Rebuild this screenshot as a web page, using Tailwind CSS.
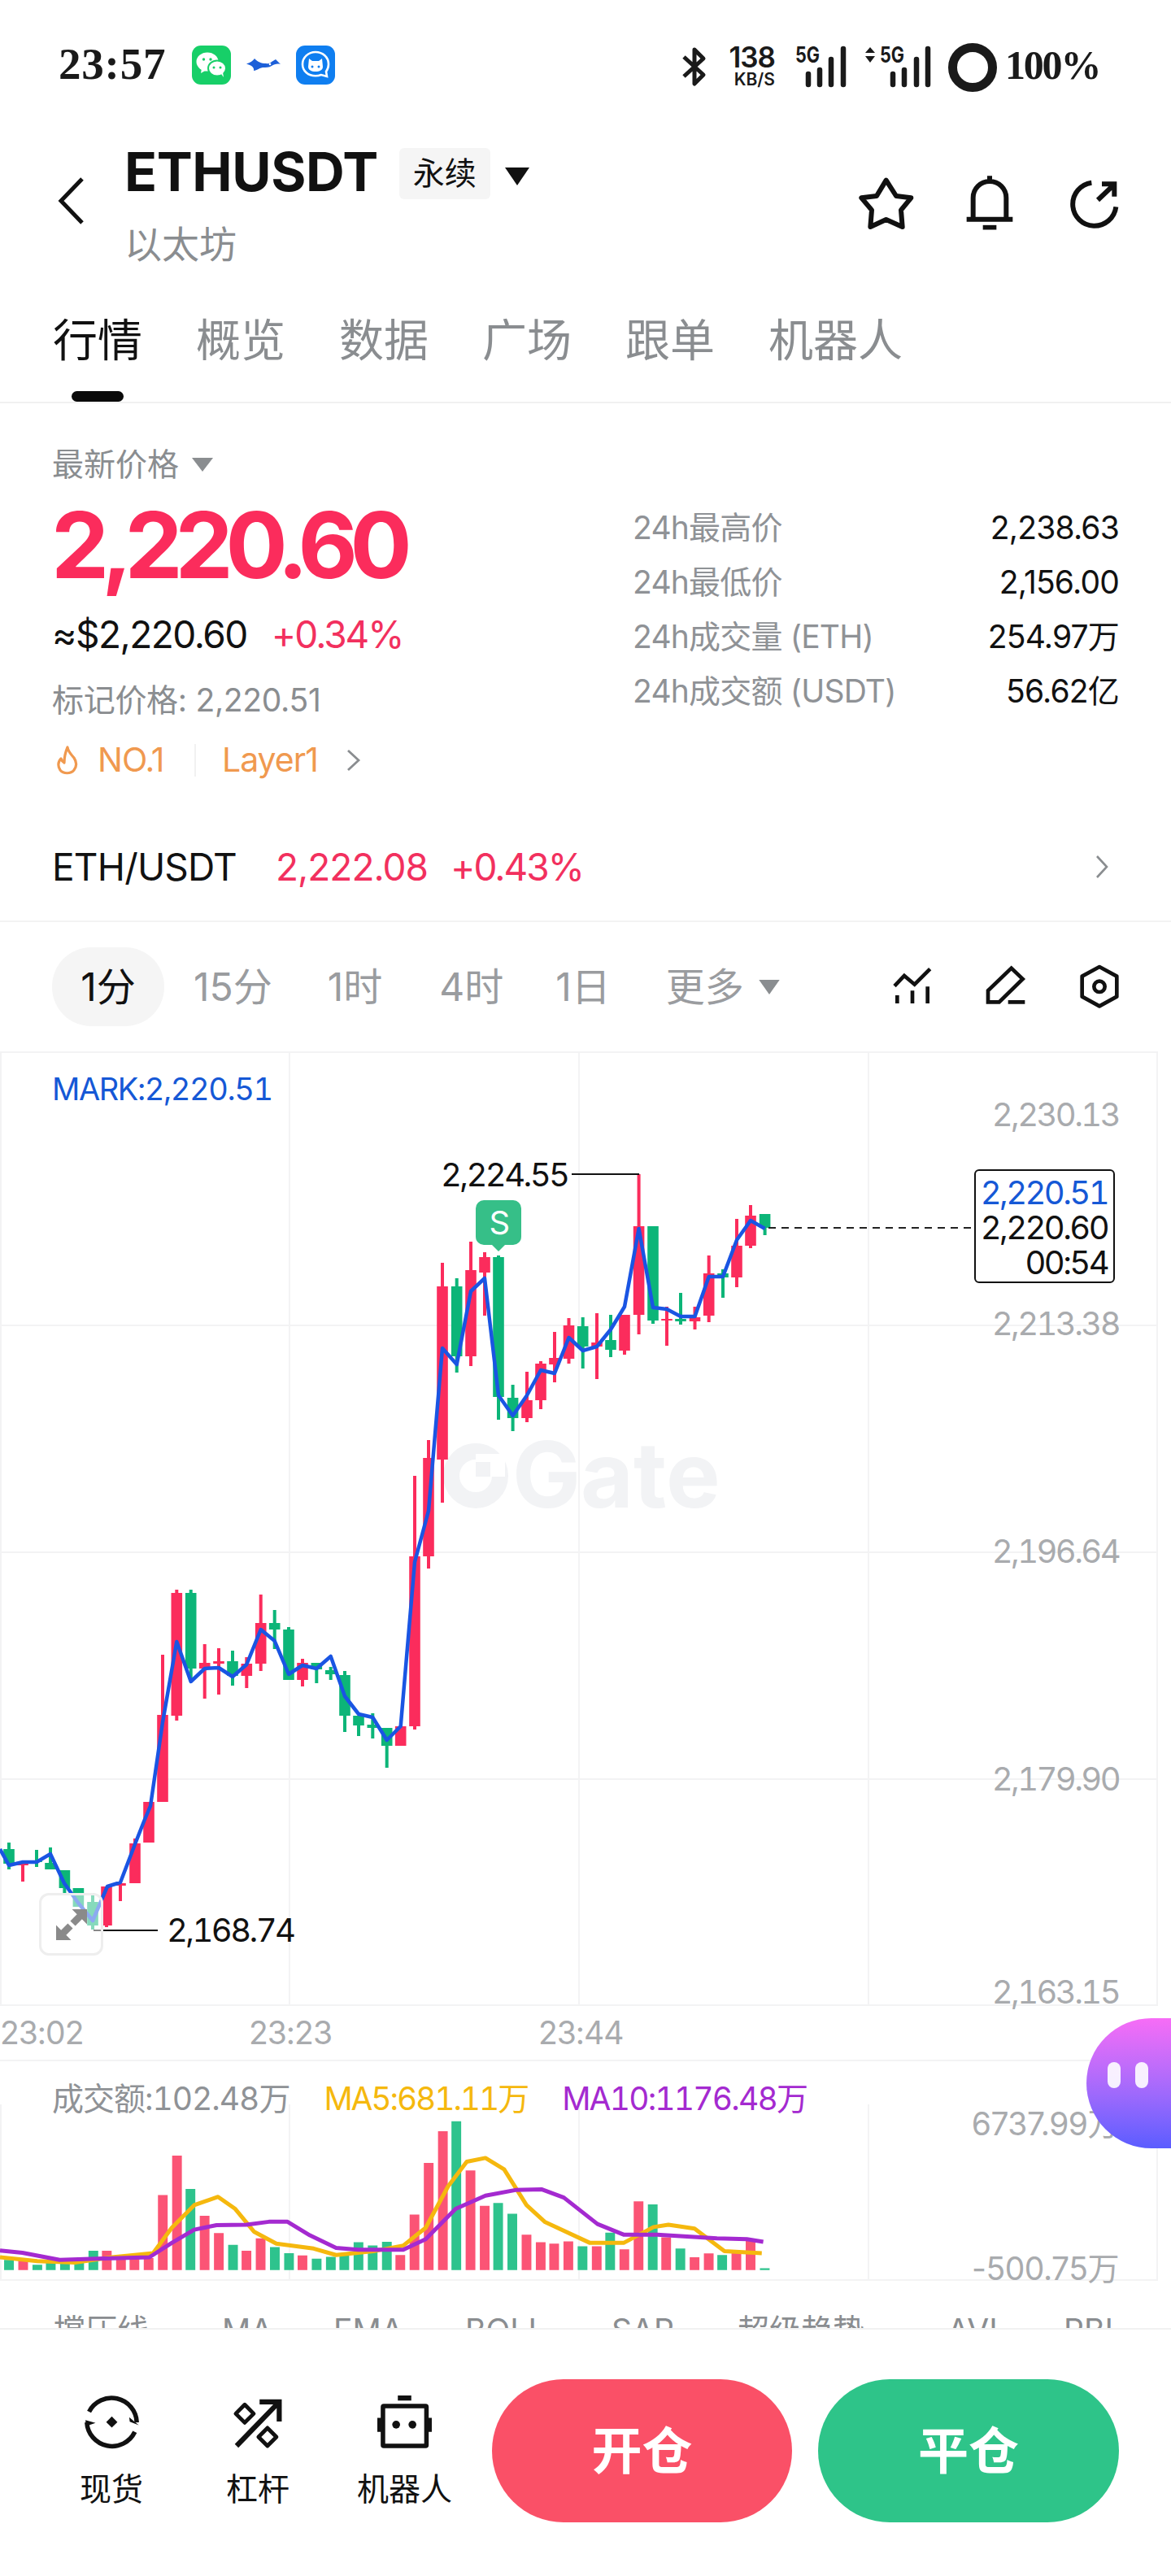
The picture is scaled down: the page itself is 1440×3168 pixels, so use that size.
<!DOCTYPE html>
<html lang="zh">
<head>
<meta charset="utf-8">
<script src="https://cdn.jsdelivr.net/npm/@tailwindcss/browser@4"></script>
<title>ETHUSDT</title>
</head>
<body class="bg-white">
<div class="relative w-[1440px] h-[3168px] overflow-hidden bg-white text-[#111] font-[Inter,'Noto_Sans_CJK_SC',sans-serif]">

  <!-- status bar -->
  <div class="flex items-start h-[160px] pt-[56px]">
    <span class="ml-[72px] w-[164px] h-[48px] leading-[46px] text-[55px] font-bold tracking-[0.8px] text-[#1a1a1a] font-['Liberation_Serif',serif]">23:57</span>
    <svg class="w-[48px] h-[48px]" viewBox="0 0 48 48"><rect width="48" height="48" rx="11" fill="#17cf68"/><ellipse cx="19" cy="20" rx="13.5" ry="11.5" fill="#fff"/><path d="M12 28l-1 6 7-4z" fill="#fff"/><ellipse cx="31" cy="28" rx="11" ry="9.5" fill="#fff" stroke="#17cf68" stroke-width="2"/><path d="M36 35l3 4-1-6z" fill="#fff"/><circle cx="14.500" cy="17" r="1.700" fill="#17cf68"/><circle cx="23" cy="17" r="1.700" fill="#17cf68"/><circle cx="27" cy="27" r="1.500" fill="#17cf68"/><circle cx="35" cy="27" r="1.500" fill="#17cf68"/></svg>
    <svg class="ml-[19px] mt-[15px] w-[42px] h-[18px]" viewBox="0 0 42 16"><path d="M0 6.500C5 5 8 3 10 0c4 4 8 6 14 6 4 1 6-1 7-2l5-3 6 6c-4-1-8 0-11 2-3 2-7 2-11 2-5 1-8 4-11 4 1-4-3-7-9-8.500z" fill="#1c5fd8"/><circle cx="29" cy="7" r="1.300" fill="#fff"/></svg>
    <svg class="ml-[19px] w-[48px] h-[48px]" viewBox="0 0 48 48"><rect width="48" height="48" rx="11" fill="#0f7ef0"/><path d="M24 8c9 0 16 6.500 16 15 0 4-1.500 7-3 9l1 6-7-2c-2 .8-4.500 1.300-7 1.300-9 0-16-6-16-14.300S15 8 24 8z" fill="none" stroke="#fff" stroke-width="2.600"/><path d="M16 16l4 3h8l4-3 1 10c0 4-4 6-9 6s-9-2-9-6z" fill="#fff"/><circle cx="20" cy="26" r="1.500" fill="#0f7ef0"/><circle cx="28" cy="26" r="1.500" fill="#0f7ef0"/></svg>
    <svg class="ml-[427px] w-[30px] h-[52px]" viewBox="0 0 30 50"><path d="M2 13l24 22-11 11V4l11 11L2 37" fill="none" stroke="#1a1a1a" stroke-width="5" stroke-linejoin="round"/></svg>
    <div class="ml-[25px] w-[59px] text-right font-semibold text-[#1a1a1a]">
      <div class="h-[28px] leading-[28px] text-[35px] tracking-[-1px]">138</div>
      <div class="mt-[4px] h-[20px] leading-[20px] text-[21px]">KB/S</div>
    </div>
    <svg class="ml-[25px] w-[66px] h-[52px] overflow-visible" viewBox="0 0 66 52"><text x="0" y="21" font-size="27" font-weight="700" fill="#1a1a1a" textLength="30" lengthAdjust="spacingAndGlyphs">5G</text><path d="M16 48V35M30 48V30M44 48V17M59 48V4" stroke="#1a1a1a" stroke-width="6.500" stroke-linecap="round"/></svg>
    <svg class="ml-[20px] w-[81px] h-[52px] overflow-visible" viewBox="0 0 81 52"><path d="M0 9l6-7 6 7zM0 13l6 8 6-8z" fill="#1a1a1a"/><text x="18" y="21" font-size="27" font-weight="700" fill="#1a1a1a" textLength="30" lengthAdjust="spacingAndGlyphs">5G</text><path d="M34 48V35M48 48V30M63 48V17M77 48V4" stroke="#1a1a1a" stroke-width="6.500" stroke-linecap="round"/></svg>
    <svg class="ml-[21px] -mt-[3px] w-[60px] h-[60px]" viewBox="0 0 60 60"><circle cx="30" cy="30" r="24.500" fill="none" stroke="#1a1a1a" stroke-width="11"/></svg>
    <span class="ml-[10px] -mt-[4px] h-[56px] leading-[56px] text-[50px] font-bold tracking-[-2.200px] text-[#1a1a1a] font-['Liberation_Serif',serif]">100%</span>
  </div>

  <!-- header -->
  <div class="flex items-start h-[200px]">
    <svg class="ml-[68px] mt-[56px] w-[40px] h-[62px]" viewBox="0 0 40 62"><path d="M33 4L7 31l26 27" fill="none" stroke="#111" stroke-width="5"/></svg>
    <div class="ml-[45px] w-[530px]">
      <div class="flex items-start h-[115px]">
        <span class="h-[90px] leading-[90px] mt-[6px] text-[66px] font-bold tracking-[-0.4px]">ETHUSDT</span>
        <span class="ml-[26px] mt-[22px] w-[112px] h-[63px] rounded-[6px] bg-[#f5f5f5] flex items-center justify-center text-[39px]">永续</span>
        <svg class="ml-[18px] mt-[46px] w-[30px] h-[22px]" viewBox="0 0 30 22"><path d="M0 0h30L15 22z" fill="#111"/></svg>
      </div>
      <div class="h-[50px] leading-[50px] text-[46px] text-[#8a8d90]">以太坊</div>
    </div>
    <div class="ml-auto mr-[58px] mt-[55px] flex gap-[57px]">
      <svg class="w-[72px] h-[72px]" viewBox="150 40 216 216"><path d="M263 60L300 118 355 125 318 170 323 232 263 205 205 232 210 170 172 125 228 118Z" fill="none" stroke="#111" stroke-width="18" stroke-linejoin="round"/></svg>
      <svg class="w-[72px] h-[72px]" viewBox="540 40 216 216"><path d="M648 44V66M587 205V125A61 61 0 0 1 709 125V205M563 204H733" fill="none" stroke="#111" stroke-width="18"/><path d="M623 234H673" stroke="#111" stroke-width="17"/></svg>
      <svg class="w-[72px] h-[72px]" viewBox="925 42 216 216"><path d="M1022 71A80 80 0 1 0 1112 160M1045 135L1105 78M1060 76H1106V122" fill="none" stroke="#111" stroke-width="18"/></svg>
    </div>
  </div>

  <!-- tabs -->
  <div class="relative h-[136px] border-b-2 border-[#f1f1f1]">
    <div class="flex gap-[66px] pl-[65px] pt-[26px] text-[55px] leading-[64px] text-[#8a8d90]">
      <span class="text-[#111]">行情</span><span>概览</span><span>数据</span><span>广场</span><span>跟单</span><span>机器人</span>
    </div>
    <div class="absolute left-[88px] top-[121px] w-[64px] h-[13px] rounded-full bg-[#0a0a0a]"></div>
  </div>

  <!-- price block -->
  <div class="flex h-[504px] items-start">
    <div class="ml-[64px] w-[650px] pt-[50px]">
      <div class="flex items-center h-[50px] text-[39px] text-[#8a8d90]">最新价格
        <svg class="ml-[16px] w-[26px] h-[17px]" viewBox="0 0 26 17"><path d="M0 0h26L13 17z" fill="#8a8d90"/></svg>
      </div>
      <div class="mt-[14px] -ml-[1px] h-[120px] leading-[120px] text-[113px] font-bold tracking-[-9.200px] text-[#fb2c5c]">2,220.60</div>
      <div class="mt-[22px] flex items-center h-[56px] text-[46px] tracking-[-1.500px]"><span>≈$2,220.60</span><span class="ml-[30px] tracking-[-2px] text-[#f2305e]">+0.34%</span></div>
      <div class="mt-[28px] h-[50px] leading-[50px] text-[39px] tracking-[-0.300px] text-[#8a8d90]">标记价格: 2,220.51</div>
      <div class="mt-[24px] flex items-center h-[50px] text-[41px] tracking-[-1px] text-[#f0994f]">
        <svg class="ml-[4px] w-[30px] h-[36px]" viewBox="0 0 30 36"><path d="M15 2c1 6 4 8 8 13 4 6 3 11 0 15-4 5-13 5-17 0-3-4-3-10 1-14 1 3 2 4 4 5 0-6 1-12 4-19z" fill="none" stroke="#f0994f" stroke-width="3.200" stroke-linejoin="round"/></svg>
        <span class="ml-[22px] w-[119px]">NO.1</span>
        <span class="w-[2px] h-[40px] bg-[#f1f1f1]"></span>
        <span class="ml-[32px]">Layer1</span>
        <svg class="ml-[34px] w-[20px] h-[30px]" viewBox="0 0 20 30"><path d="M3 3l13 12L3 27" fill="none" stroke="#8a8d90" stroke-width="2.800"/></svg>
      </div>
    </div>
    <div class="ml-[64px] w-[598px] pt-[120px] text-[39px] tracking-[-0.800px]">
      <div class="flex justify-between items-center h-[67px]"><span class="text-[#8f9296]">24h最高价</span><span>2,238.63</span></div>
      <div class="flex justify-between items-center h-[67px]"><span class="text-[#8f9296]">24h最低价</span><span>2,156.00</span></div>
      <div class="flex justify-between items-center h-[67px]"><span class="text-[#8f9296]">24h成交量 (ETH)</span><span>254.97万</span></div>
      <div class="flex justify-between items-center h-[67px]"><span class="text-[#8f9296]">24h成交额 (USDT)</span><span>56.62亿</span></div>
    </div>
  </div>

  <!-- spot row -->
  <div class="flex items-center h-[134px] pl-[64px] pr-[76px] text-[46px] tracking-[-1.500px] border-b-2 border-[#f3f3f3]">
    <span class="tracking-[-0.800px]">ETH/USDT</span>
    <span class="ml-[48px] tracking-[-1px] text-[#f2305e]">2,222.08</span>
    <span class="ml-[28px] tracking-[-2px] text-[#f2305e]">+0.43%</span>
    <svg class="ml-auto w-[18px] h-[30px]" viewBox="0 0 18 30"><path d="M3 2l12 13L3 28" fill="none" stroke="#8a8d90" stroke-width="2.600"/></svg>
  </div>

  <!-- timeframes -->
  <div class="flex items-center h-[159px] pl-[64px] pr-[58px] text-[48px] text-[#9a9c9f]">
    <span class="w-[138px] h-[97px] rounded-[48px] bg-[#f5f5f5] flex items-center justify-center text-[#111]">1分</span>
    <span class="ml-[36px]">15分</span>
    <span class="ml-[68px]">1时</span>
    <span class="ml-[70px]">4时</span>
    <span class="ml-[64px]">1日</span>
    <span class="ml-[68px]">更多</span>
    <svg class="ml-[18px] w-[26px] h-[18px]" viewBox="0 0 24 17"><path d="M0 0h24L12 17z" fill="#8a8d90"/></svg>
    <svg class="ml-auto w-[60px] h-[60px]" viewBox="150 140 180 180"><path d="M174 226L210 188 248 220 305 163" fill="none" stroke="#111" stroke-width="14"/><path d="M184 260V290M240 243V290M296 228V290" stroke="#111" stroke-width="14"/></svg>
    <svg class="ml-[55px] w-[60px] h-[60px]" viewBox="500 140 180 180"><path d="M610 160L652 200 565 285H524V243ZM598 285H660" fill="none" stroke="#111" stroke-width="14"/></svg>
    <svg class="ml-[55px] w-[60px] h-[60px]" viewBox="846 140 180 180"><path d="M936 155L1000 190V265L936 300 872 265V190Z" fill="none" stroke="#111" stroke-width="14" stroke-linejoin="round"/><circle cx="936" cy="228" r="20" fill="none" stroke="#111" stroke-width="14"/></svg>
  </div>

  <!-- candlestick canvas -->
  <div class="relative h-[1174px] text-[40px] tracking-[-2.600px] tabular-nums">
    <svg class="absolute inset-0 w-[1440px] h-[1174px]" viewBox="0 1295 1440 1174" fill="none">
      <path d="M0 1296H1423M0 1632H1423M0 1911H1423M0 2190H1423M0 2468H1423M1 1295V2469M356 1295V2469M712 1295V2469M1068 1295V2469M1423 1295V2469" stroke="#f3f3f4" stroke-width="2"/>
      <circle cx="585" cy="1817" r="30" stroke="#f2f3f5" stroke-width="20"/><rect x="585" y="1790" width="36" height="28" fill="#fff"/><rect x="585" y="1800" width="18" height="18" fill="#f2f3f5"/>
      <text x="630" y="1856" font-size="112" font-weight="700" letter-spacing="0" fill="#f2f3f5">Gate</text>
      <path stroke="#fb2c5c" stroke-width="4" d="M28 2292V2316M131 2322V2372M148 2318V2340M166 2263V2318M183 2218V2268M200 2037V2218M217.300 1957V2118M251.700 2024V2091M269 2029V2086M303.300 2040V2078M320.700 1963V2057M372 2042V2076M510 1817V2129M527 1773V1931M544 1555V1850M579 1529V1682M596 1542V1620M648 1689V1751M665 1676V1735M682 1640V1702M699.500 1623V1679M734 1617V1698M768 1619V1668M785.600 1446V1643M820 1609V1657M854.500 1609V1637M871.700 1546V1628M906 1501V1585M923 1484V1537"/>
      <path stroke="#fb2c5c" stroke-width="13.600" d="M28 2292V2296M131 2322V2370M148 2318V2321M166 2269V2318M183 2218V2268M200 2111V2218M217.300 1961V2112M251.700 2047V2054M269 2045V2048M303.300 2048V2063M320.700 1998V2048M372 2047V2068M492.700 2125V2149M510 1916V2125M527 1795V1916M544 1584V1797M579 1564V1670M596 1548V1567M648 1724V1746M665 1679V1724M682 1672V1680M699.500 1632V1673M734 1653V1658M768 1619V1663M785.600 1510V1619M820 1624V1626M854.500 1622V1627M871.700 1568V1620M906 1534V1573M923 1497V1534"/>
      <path stroke="#0cb578" stroke-width="4" d="M11 2268V2301M45 2277V2298M62 2274V2301M79.400 2302V2333M114 2330V2375M234.700 1957V2070M286 2032V2075M337.700 1982V2030M355 2003V2068M389.300 2047V2072M406.700 2052V2068M424 2057V2132M441 2112V2137M458.300 2109V2140M475.700 2127V2176M561.700 1574V1690M613 1546V1748M630.600 1705V1762M716.700 1622V1685M751 1619V1671M803 1510V1630M837 1592V1631M889 1563V1598M940.600 1495V1521"/>
      <path stroke="#0cb578" stroke-width="13.600" d="M11 2276V2294M45 2290V2292M62 2293V2301M79.400 2302V2324M96.400 2324V2347M114 2341V2370M234.700 1961V2054M286 2045V2063M337.700 1998V2006M355 2006V2068M389.300 2047V2055M406.700 2056V2061M424 2062V2112M441 2112V2124M458.300 2123V2127M475.700 2127V2149M561.700 1584V1670M613 1548V1720M630.600 1721V1746M716.700 1633V1658M751 1650V1662M803 1510V1626M837 1624V1627M889 1568V1573M940.600 1495V1512"/>
      <polyline stroke="#1a55e3" stroke-width="4.500" stroke-linejoin="round" points="0,2276 11,2296 28,2292 45,2292 62,2282 79,2318 96,2342 114,2364 132,2322 148,2317 166,2270 177,2242 185,2223 200,2120 217.300,2021 234.700,2070 251.700,2054 269,2053 286,2064 303.300,2049 320.700,2006 337.700,2020 355,2061 372,2050 389.300,2054 406.700,2039 424,2088 441,2110 458.300,2114 475.700,2142 492.700,2125 510,1923 527,1860 544,1660 561.700,1680 579,1590 596,1574 613,1718 630.600,1743 648,1718 665,1687 682,1691 699.500,1647 716.700,1663 734,1658 751,1637 768,1609 785.600,1513 803,1610 820,1612 837,1621 854.500,1621 871.700,1572 889,1572 906,1527 923,1503 940.600,1513"/>
      <path d="M703 1446H786" stroke="#111" stroke-width="2"/>
      <path d="M115 2376H194" stroke="#111" stroke-width="2"/>
      <path d="M945 1512H1198" stroke="#222" stroke-width="2" stroke-dasharray="9 7"/>
      <path d="M604 1532h18l-9 9z" fill="#36bf88"/>
    </svg>

    <span class="absolute left-[64px] top-[21px] h-[50px] leading-[50px] text-[38px] tracking-[-1.400px] text-[#1558d6]">MARK:2,220.51</span>
    <span class="absolute right-[64px] top-[53px] h-[50px] leading-[50px] text-[#a9abae]">2,230.13</span>
    <span class="absolute right-[64px] top-[310px] h-[50px] leading-[50px] text-[#a9abae]">2,213.38</span>
    <span class="absolute right-[64px] top-[590px] h-[50px] leading-[50px] text-[#a9abae]">2,196.64</span>
    <span class="absolute right-[64px] top-[870px] h-[50px] leading-[50px] text-[#a9abae]">2,179.90</span>
    <span class="absolute right-[64px] top-[1132px] h-[50px] leading-[50px] text-[#a9abae]">2,163.15</span>

    <span class="absolute left-[542px] top-[127px] h-[50px] leading-[50px]">2,224.55</span>
    <span class="absolute left-[585px] top-[183px] w-[56px] h-[55px] rounded-[10px] bg-[#36bf88] text-white text-[40px] leading-[55px] text-center">S</span>
    <span class="absolute left-[205px] top-[1056px] h-[50px] leading-[50px]">2,168.74</span>

    <div class="absolute left-[1198px] top-[145px] w-[173px] h-[140px] rounded-[6px] border-2 border-[#111] bg-white pr-[7px] text-right leading-[43px] text-[40px] pt-[5px]">
      <div class="text-[#1558d6]">2,220.51</div>
      <div>2,220.60</div>
      <div>00:54</div>
    </div>

    <div class="absolute left-[48px] top-[1035px] w-[79px] h-[77px] rounded-[12px] border-[3px] border-[#eeeeee] bg-white/50 flex items-center justify-center">
      <svg class="w-[38px] h-[38px]" viewBox="0 0 37 37"><path d="M0 37V19l6 6 8-8 6 6-8 8 6 6zM37 0V18l-6-6-8 8-6-6 8-8-6-6z" fill="#8a8a8a"/></svg>
    </div>
  </div>

  <!-- time axis -->
  <div class="flex items-center h-[66px] text-[39px] tracking-[-1px] text-[#a9abae]">
    <span class="w-[100px]">23:02</span>
    <span class="ml-[206px] w-[100px]">23:23</span>
    <span class="ml-[256px]">23:44</span>
  </div>

  <!-- volume pane -->
  <div class="relative h-[272px] border-t-2 border-[#f3f3f4]">
    <svg class="absolute left-0 top-[-2px] w-[1440px] h-[272px]" viewBox="0 2535 1440 272" fill="none">
      <path d="M0 2806H1423M1 2590V2807M356 2590V2807M712 2590V2807M1068 2590V2807M1423 2590V2807" stroke="#f3f3f4" stroke-width="2"/>
      <g transform="translate(0 2440) scale(0.9184 0.4643)">
        <path stroke="#fb5475" stroke-width="13" d="M31 762V735M143 762V711M162 762V722M180 762V722M199 762V730M218 762V563M237 762V459M274 762V618M293 762V664M330 762V711M349 762V678M405 762V723M536 762V722M555 762V615M574 762V478M593 762V394M630 762V498M649 762V592M705 762V668M724 762V688M742 762V692M761 762V686M799 762V699M836 762V707M855 762V580M892 762V675M930 762V728M949 762V718M986 762V715M1005 762V685"/>
        <path stroke="#2ec38d" stroke-width="13" d="M12 762V735M50 762V748M68 762V743M87 762V743M106 762V742M125 762V711M255 762V547M312 762V695M368 762V701M387 762V717M424 762V732M443 762V727M461 762V720M480 762V688M499 762V697M518 762V687M611 762V368M667 762V584M686 762V613M780 762V699M817 762V663M874 762V588M911 762V705M967 762V722M1024 762V757"/>
        <polyline stroke="#f5b80e" stroke-width="5" vector-effect="non-scaling-stroke" stroke-linejoin="round" points="0,728 50,738 100,742 150,728 205,717 230,650 260,590 292,568 315,600 340,660 370,692 420,705 450,722 500,712 540,697 570,650 600,540 625,475 650,465 675,495 705,590 730,635 790,690 835,690 875,648 895,642 930,652 970,712 1020,717"/>
        <polyline stroke="#a42ad0" stroke-width="5" vector-effect="non-scaling-stroke" stroke-linejoin="round" points="0,710 30,716 80,735 130,732 200,728 230,690 260,655 290,643 330,642 360,634 385,634 415,670 450,703 480,708 540,708 570,680 610,600 650,565 690,550 725,548 755,570 800,640 835,668 880,668 960,678 1000,680 1022,687"/>
      </g>
    </svg>
    <div class="relative flex items-center pl-[64px] pt-[21px] h-[71px] text-[39px] tabular-nums text-[#8f9296]">
      <span class="tracking-[-1px]">成交额:102.48万</span>
      <span class="ml-[42px] tracking-[-2.100px] text-[#f5b80e]">MA5:681.11万</span>
      <span class="ml-[42px] tracking-[-1.800px] text-[#a42ad0]">MA10:1176.48万</span>
    </div>
    <span class="absolute right-[64px] top-[52px] h-[50px] leading-[50px] text-[39px] tracking-[-0.500px] text-[#a9abae] whitespace-nowrap">6737.99万</span>
    <span class="absolute right-[64px] top-[230px] h-[50px] leading-[50px] text-[39px] tracking-[-0.500px] text-[#a9abae] whitespace-nowrap">-500.75万</span>
  </div>

  <!-- indicator tabs (clipped by the bottom bar) -->
  <div class="h-[58px] overflow-hidden pt-[36px] pl-[66px] flex text-[39px] leading-[50px] text-[#8a8d90] whitespace-nowrap">
    <span class="w-[207px] shrink-0">撑压线</span><span class="w-[137px] shrink-0">MA</span><span class="w-[162px] shrink-0">EMA</span><span class="w-[180px] shrink-0">BOLL</span><span class="w-[155px] shrink-0">SAR</span><span class="w-[258px] shrink-0">超级趋势</span><span class="w-[143px] shrink-0">AVL</span><span class="w-[68px] shrink-0 overflow-hidden">PBI</span>
  </div>

  <!-- bottom bar -->
  <div class="flex items-start h-[303px] border-t-2 border-[#f1f1f1] bg-white">
    <div class="flex w-[570px] pt-[75px] pl-[64px] text-[39px] leading-[50px] text-center">
      <div class="w-[146px]">
        <svg class="mx-auto w-[69px] h-[76px]" viewBox="126 65 200 220"><path d="M145 140A90 90 0 0 1 315 178M308 212A90 90 0 0 1 137 178" fill="none" stroke="#111" stroke-width="16"/><path d="M288 160L322 188 290 176ZM132 170L168 180 134 192Z" fill="#111"/><path d="M226 157L246 177 226 197 206 177Z" fill="#111"/></svg>
        <div class="mt-[20px]">现货</div>
      </div>
      <div class="ml-[34px] w-[146px]">
        <svg class="mx-auto w-[69px] h-[76px]" viewBox="645 65 200 220"><path d="M668 262L815 110M750 105H820V175" fill="none" stroke="#111" stroke-width="18"/><path d="M697 115L729 147 697 179 665 147ZM778 198L810 230 778 262 746 230Z" fill="none" stroke="#111" stroke-width="14" stroke-linejoin="round"/></svg>
        <div class="mt-[20px]">杠杆</div>
      </div>
      <div class="ml-[35px] w-[145px]">
        <svg class="mx-auto w-[69px] h-[76px]" viewBox="1172 65 200 220"><rect x="1195" y="120" width="155" height="142" rx="3" fill="none" stroke="#111" stroke-width="16"/><path d="M1175 162h14v50h-14zM1355 162h14v50h-14zM1248 82h48v18h-48z" fill="#111"/><circle cx="1242" cy="186" r="14" fill="#111"/><circle cx="1300" cy="186" r="14" fill="#111"/></svg>
        <div class="mt-[20px]">机器人</div>
      </div>
    </div>
    <div class="ml-[35px] mt-[61px] w-[369px] h-[176px] rounded-full bg-[#fa5067] flex items-center justify-center text-white text-[62px] font-bold">开仓</div>
    <div class="ml-[32px] mt-[61px] w-[370px] h-[176px] rounded-full bg-[#2ec489] flex items-center justify-center text-white text-[62px] font-bold">平仓</div>
  </div>

  <!-- floating assistant -->
  <div class="absolute right-0 top-[2482px] w-[104px] h-[160px] rounded-l-[80px] bg-gradient-to-b from-[#f76cf6] to-[#5a5cff] flex items-center gap-[18px] pl-[26px]">
    <span class="w-[16px] h-[32px] -mt-[20px] rounded-full bg-white/90"></span>
    <span class="w-[16px] h-[32px] -mt-[20px] rounded-full bg-white/90"></span>
  </div>
</div>
</body>
</html>
